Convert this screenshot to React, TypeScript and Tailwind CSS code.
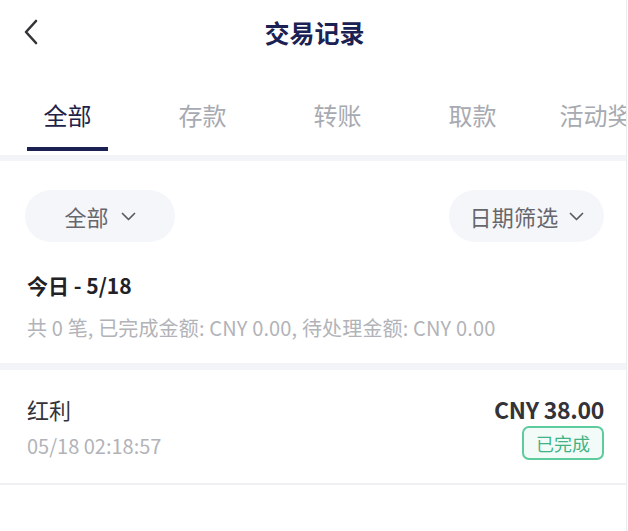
import React from "react";

const font = { fontFamily: '"Noto Sans CJK SC", "Noto Sans", sans-serif' };

function Chevron() {
  return (
    <svg width="15" height="9" viewBox="0 0 15 9" fill="none">
      <polyline points="1.5,1.5 7.5,7.5 13.5,1.5" stroke="#5a5a62" strokeWidth="1.7" strokeLinecap="round" strokeLinejoin="round" />
    </svg>
  );
}

export default function App() {
  const tabs = ["全部", "存款", "转账", "取款", "活动奖励"];
  return (
    <div className="w-[628px] h-[531px] bg-white overflow-hidden" style={font}>
      <div className="w-[627px] h-full border-r border-[#ececef] flex flex-col">
        {/* Header */}
        <div className="h-[66px] flex items-center relative shrink-0">
          <div className="pl-[23px] flex items-center mt-[-3px]">
            <svg width="16" height="26" viewBox="0 0 16 26" fill="none">
              <polyline points="13,2 3,13 13,24" stroke="#333338" strokeWidth="2.6" strokeLinecap="round" strokeLinejoin="round" />
            </svg>
          </div>
          <div className="absolute left-0 right-0 top-0 h-full flex items-center justify-center pointer-events-none">
            <span className="text-[25px] leading-[25px] font-bold text-[#1b2152] pl-[3px] mt-[-1px]">交易记录</span>
          </div>
        </div>

        {/* Tabs */}
        <div className="h-[89px] flex shrink-0 overflow-hidden">
          {tabs.map((t, i) => (
            <div key={t} className="w-[135px] shrink-0 flex flex-col items-center justify-end pb-[4px]">
              <span className={`text-[24px] leading-[24px] whitespace-nowrap ${i === 0 ? "text-[#1e2349]" : "text-[#a7aab1]"}`}>{t}</span>
              <div className={`mt-[20px] h-[4px] w-[81px] ${i === 0 ? "bg-[#1b2152]" : "bg-transparent"}`} />
            </div>
          ))}
        </div>
        <div className="h-[6px] bg-[#f3f4f7] shrink-0" />

        {/* Filters */}
        <div className="px-[25px] pt-[29px] flex justify-between items-center">
          <div className="w-[150px] h-[52px] rounded-full bg-[#f5f6fa] flex items-center justify-center gap-[12px]">
            <span className="text-[22px] leading-[22px] text-[#66666d]">全部</span>
            <Chevron />
          </div>
          <div className="w-[155px] h-[52px] rounded-full bg-[#f5f6fa] flex items-center justify-center gap-[10px] mr-[-3px]">
            <span className="text-[22px] leading-[22px] text-[#66666d] tracking-[0.3px]">日期筛选</span>
            <Chevron />
          </div>
        </div>

        {/* Day summary */}
        <div className="px-[27px] pt-[31px] pb-[24px]">
          <div className="text-[21px] leading-[24px] font-bold text-[#222226]">今日 - 5/18</div>
          <div className="mt-[19px] text-[20px] leading-[23px] text-[#b2b3b8] whitespace-nowrap tracking-[0.15px]">共 0 笔, 已完成金额: CNY 0.00, 待处理金额: CNY 0.00</div>
        </div>
        <div className="h-[7px] bg-[#f3f4f7] shrink-0" />

        {/* Row */}
        <div className="h-[115px] border-b-2 border-[#f0f0f3] pl-[27px] pr-[22px] flex justify-between items-start pt-[24px] shrink-0">
          <div className="flex flex-col">
            <span className="text-[22px] leading-[30px] text-[#333338]">红利</span>
            <span className="mt-[10px] text-[20px] leading-[24px] text-[#b2b3b8]">05/18 02:18:57</span>
          </div>
          <div className="flex flex-col items-end">
            <span className="text-[23px] leading-[30px] font-bold text-[#333338] tracking-[-0.3px]">CNY 38.00</span>
            <span className="mt-[2px] h-[34px] px-[12px] rounded-[7px] border-2 border-[#5dcb9e] bg-[#f2fbf7] text-[#3fb383] text-[18px] leading-[18px] flex items-center">已完成</span>
          </div>
        </div>
      </div>
    </div>
  );
}
